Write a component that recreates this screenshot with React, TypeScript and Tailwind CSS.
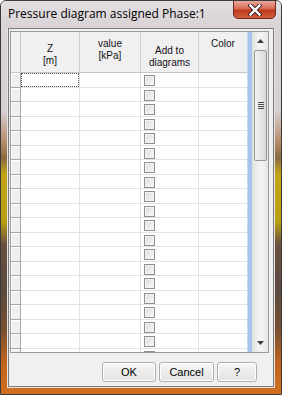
import React from "react";

const rows = Array.from({ length: 20 }, (_, i) => i);

function Checkbox() {
  return (
    <div className="w-[11px] h-[11px] border border-[#8f8f8f] bg-gradient-to-br from-[#dcdcdc] to-[#f8f8f8] shadow-[inset_0_0_0_1px_#f4f4f4]" />
  );
}

export default function App() {
  return (
    <div
      className="w-[282px] h-[395px] flex flex-col border border-[#3a3a3a] rounded-t-[6px] overflow-hidden"
      style={{
        background:
          "linear-gradient(to bottom, #dcd6d9 0%, #d6cfd2 28%, #b48a66 36%, #8a6a40 40%, #c4a418 44%, #b8a010 56%, #6a5040 62%, #5a4a40 74%, #7a5030 84%, #c0641e 92%, #d0701e 100%)",
        fontFamily: '"Liberation Sans", Arial, sans-serif',
      }}
    >
      {/* Title bar */}
      <div className="relative h-[27px] shrink-0">
        <div
          className="absolute inset-x-0 top-0 h-[27px]"
          style={{ background: "linear-gradient(to bottom, #e2dde0, #d9d3d6)" }}
        />
        <div
          className="absolute left-[7px] top-[5px] text-[12px] leading-[16px] text-black"
          style={{ fontFamily: '"Open Sans", "Noto Sans", sans-serif' }}
        >
          Pressure diagram assigned Phase:1
        </div>
        <div
          className="absolute top-[-1px] right-[5px] w-[43px] h-[19px] rounded-b-[5px] border border-[#6b2a22] flex items-center justify-center"
          style={{
            background:
              "linear-gradient(to bottom, #e9a89a 0%, #d86a55 45%, #c0391f 55%, #d4603e 100%)",
          }}
        >
          <svg width="14" height="12" viewBox="0 0 14 12">
            <path d="M2.5 1.5 L11.5 10.5 M11.5 1.5 L2.5 10.5" stroke="#3a2020" strokeWidth="4.2" strokeLinecap="square" />
            <path d="M2.5 1.5 L11.5 10.5 M11.5 1.5 L2.5 10.5" stroke="#ffffff" strokeWidth="2.4" strokeLinecap="square" />
          </svg>
        </div>
      </div>

      {/* Client area */}
      <div className="ml-[7px] w-[266px] h-[359px] border border-[#7a7a7a] bg-[#f0f0f0] flex flex-col shadow-[0_0_0_1px_#e8e4e4]">
        {/* Grid */}
        <div className="ml-[1px] mt-[2px] w-[259px] h-[322px] border border-[#9a9a9a] bg-white flex overflow-hidden">
          <div className="flex flex-col w-[236px] shrink-0">
            {/* Header */}
            <div className="flex h-[41px] shrink-0 border-b border-[#c6c6c6] bg-[#f0f0f0] text-[10px] leading-[12px] text-[#111] text-center">
              <div className="w-[10px] border-r border-[#c6c6c6] bg-[#f0f0f0]" />
              <div className="w-[59px] border-r border-[#d0d0d0] pt-[11px]">
                <div>Z</div>
                <div>[m]</div>
              </div>
              <div className="w-[61px] border-r border-[#d0d0d0] pt-[6px]">
                <div>value</div>
                <div>[kPa]</div>
              </div>
              <div className="w-[58px] border-r border-[#d0d0d0] pt-[13px]">
                <div>Add to</div>
                <div>diagrams</div>
              </div>
              <div className="w-[48px] pt-[6px]">
                <div>Color</div>
              </div>
            </div>
            {/* Rows */}
            <div className="flex flex-col">
              {rows.map((i) => (
                <div key={i} className="flex h-[14.5px] shrink-0">
                  <div className="w-[10px] border-r border-b border-[#a8a8a8] bg-[#f0f0f0] shadow-[inset_1px_1px_0_#ffffff]" />
                  <div className="w-[59px] border-r border-b border-[#e2e2e2] relative">
                    {i === 0 && (
                      <div className="absolute inset-0 border border-dotted border-[#555]" />
                    )}
                  </div>
                  <div className="w-[61px] border-r border-b border-[#e2e2e2]" />
                  <div className="w-[58px] border-r border-b border-[#e2e2e2] pl-[3px] pt-[2px]">
                    <Checkbox />
                  </div>
                  <div className="w-[48px] border-b border-[#e2e2e2]" />
                </div>
              ))}
            </div>
          </div>
          {/* Blue strip */}
          <div className="w-[5px] shrink-0 bg-[#a6c4ee] border-l border-[#c8d8f0]" />
          {/* Scrollbar */}
          <div className="w-[16px] shrink-0 flex flex-col border-l border-[#e0e0e0]" style={{ background: "linear-gradient(to right, #e4e4e4, #f2f2f2 40%, #f0f0f0 70%, #e4e4e4)" }}>
            <div className="h-[18px] shrink-0 flex items-center justify-center">
              <svg width="7" height="4" viewBox="0 0 7 4">
                <path d="M0 4 L3.5 0 L7 4 Z" fill="#404040" />
              </svg>
            </div>
            <div
              className="mx-[1px] h-[111px] shrink-0 rounded-[2px] border border-[#979797] flex items-center justify-center"
              style={{ background: "linear-gradient(to right, #f2f2f2, #e6e6e6 50%, #d8d8d8)" }}
            >
              <div className="flex flex-col gap-[1px]">
                <div className="w-[6px] h-[1px] bg-[#505050]" />
                <div className="w-[6px] h-[1px] bg-[#505050]" />
                <div className="w-[6px] h-[1px] bg-[#505050]" />
                <div className="w-[6px] h-[1px] bg-[#505050]" />
              </div>
            </div>
            <div className="flex-1" />
            <div className="h-[18px] shrink-0 flex items-center justify-center">
              <svg width="7" height="4" viewBox="0 0 7 4">
                <path d="M0 0 L3.5 4 L7 0 Z" fill="#404040" />
              </svg>
            </div>
          </div>
        </div>

        {/* Buttons */}
        <div className="flex gap-[3px] ml-[93px] mt-[9px] text-[11px] text-black">
          {[
            { l: "OK", w: "w-[54px]" },
            { l: "Cancel", w: "w-[55px]" },
            { l: "?", w: "w-[40px]" },
          ].map((b) => (
            <div
              key={b.l}
              className={`${b.w} h-[20px] rounded-[3px] border border-[#adadad] flex items-center justify-center shadow-[inset_0_0_0_1px_#ffffff]`}
              style={{ background: "linear-gradient(to bottom, #f6f6f6, #ececec 50%, #e2e2e2)" }}
            >
              {b.l}
            </div>
          ))}
        </div>
      </div>
    </div>
  );
}
